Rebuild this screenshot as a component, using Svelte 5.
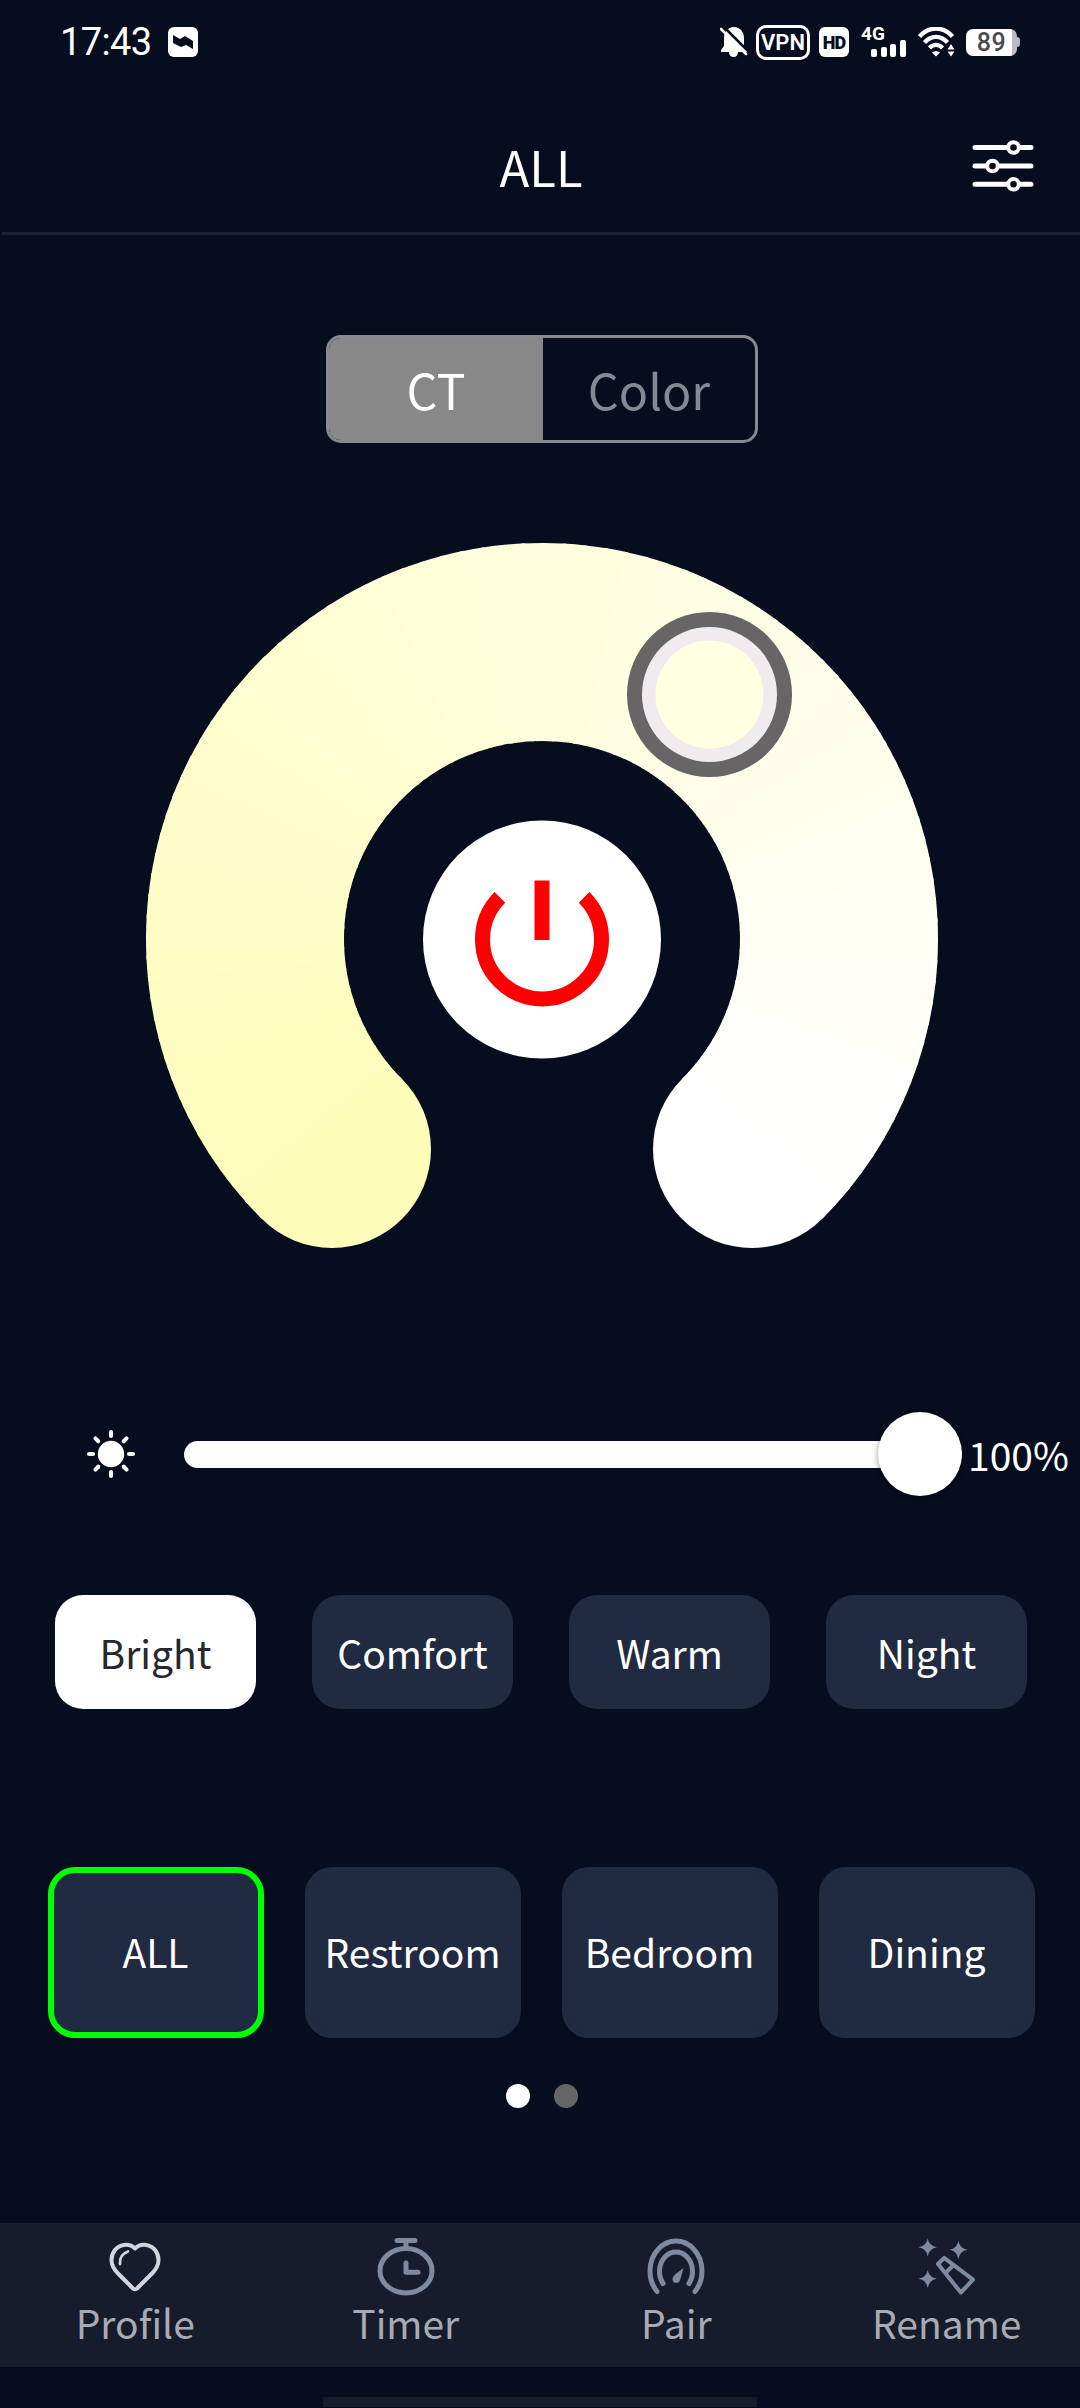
<script lang="ts">
  let mode = $state('CT')
  let scene = $state('Bright')
  let room = $state('ALL')
  let brightness = $state(100)

  const modes = ['CT', 'Color']
  const scenes = ['Bright', 'Comfort', 'Warm', 'Night']
  const rooms = ['ALL', 'Restroom', 'Bedroom', 'Dining']
  const tabs = ['Profile', 'Timer', 'Pair', 'Rename']

  // The dial sweeps 270 degrees, from bottom left to bottom right
  const CENTER = 396
  const RADIUS = 297
  const STEPS = 90

  function point(deg: number): string {
    const a = (deg * Math.PI) / 180
    return `${(CENTER + RADIUS * Math.cos(a)).toFixed(2)} ${(CENTER + RADIUS * Math.sin(a)).toFixed(2)}`
  }

  // Warm yellow to cold white
  function tone(t: number): string {
    return `rgb(${Math.round(253 + 2 * t)}, ${Math.round(253 + 2 * t)}, ${Math.round(186 + 69 * t)})`
  }

  const segments = Array.from({ length: STEPS }, (_, i) => {
    const from = 135 + (i * 270) / STEPS
    const to = Math.min(from + 270 / STEPS + 0.6, 405)
    return { d: `M${point(from)} A${RADIUS} ${RADIUS} 0 0 1 ${point(to)}`, color: tone(i / (STEPS - 1)) }
  })

  const rays = [0, 45, 90, 135, 180, 225, 270, 315]
</script>

<div class="screen">
  <div class="status">
    <div class="status-left">
      <span class="time">17:43</span>
      <svg width="30" height="30" viewBox="0 0 30 30">
        <rect width="30" height="30" rx="6" fill="#fff" />
        <path d="M5 8 L12 12 L17 9 L25 14 V22 L18 18 L13 20 L5 16Z" fill="#060d1e" />
      </svg>
    </div>
    <div class="status-right">
      <svg class="bell" width="28" height="32" viewBox="0 0 28 32">
        <path
          d="M14 1 C20 1 24 6 24 12 V20 L27 25 V26 H18 C18 29 16 31 14 31 C11 31 9 29 9 26 H1 V24 L4 20 V12 C4 6 8 1 14 1Z"
          fill="#fff"
        />
        <path d="M3 0 L28 25" stroke="#060d1e" stroke-width="2.500" />
        <path d="M1 3 L26 28" stroke="#fff" stroke-width="2.600" stroke-linecap="round" />
      </svg>
      <span class="vpn">VPN</span>
      <span class="hd">HD</span>
      <div class="signal">
        <span class="net">4G</span>
        <svg width="36" height="17" viewBox="0 0 36 17" fill="#fff">
          <rect x="0" y="9" width="6" height="8" rx="2" />
          <rect x="10" y="7" width="6" height="10" rx="2" />
          <rect x="19" y="4" width="6" height="13" rx="2" />
          <rect x="29" y="0" width="6" height="17" rx="2" />
        </svg>
      </div>
      <svg class="wifi" width="37" height="30" viewBox="0 0 37 30">
        <g fill="none" stroke="#fff" stroke-width="4.400">
          <path d="M1.500 9.500 C11 -1 25 -1 34.500 9.500" />
          <path d="M6.500 15.500 C13.500 8 22.500 8 29.500 15.500" />
          <path d="M11.500 21 C15.500 17 20.500 17 24.500 21" />
        </g>
        <path d="M14 25.500 Q18 22.500 22 25.500 L18 29.500Z" fill="#fff" />
        <path d="M29.500 22.500 L33 17 L36.500 22.500Z M29.500 24.500 L33 29.500 L36.500 24.500Z" fill="#fff" />
      </svg>
      <div class="battery"><span class="level">89</span></div>
    </div>
  </div>

  <header>
    <h1>{room}</h1>
    <svg class="filter" width="62" height="54" viewBox="0 0 62 54">
      <g stroke="#fff" stroke-width="5" stroke-linecap="round">
        <path d="M3 8.500 H59 M3 27 H59 M3 45.300 H59" />
      </g>
      <g fill="#060d1e" stroke="#fff" stroke-width="4">
        <circle cx="41.500" cy="8.500" r="5.300" />
        <circle cx="20.500" cy="27" r="5.300" />
        <circle cx="41.500" cy="45.300" r="5.300" />
      </g>
    </svg>
  </header>

  <div class="switch">
    {#each modes as m}
      <button class:active={mode === m} onclick={() => (mode = m)}>{m}</button>
    {/each}
  </div>

  <div class="dial">
    <svg width="792" height="708" viewBox="0 0 792 708">
      <circle cx="186" cy="606" r="99" fill={tone(0)} />
      <circle cx="606" cy="606" r="99" fill={tone(1)} />
      <g fill="none" stroke-width="198">
        {#each segments as s}
          <path d={s.d} stroke={s.color} />
        {/each}
      </g>

      <!-- handle -->
      <g class="handle">
        <circle cx="563.500" cy="151.500" r="82.500" fill="#676566" />
        <circle cx="563.500" cy="151.500" r="67.500" fill="#efebef" />
        <circle cx="563.500" cy="151.500" r="54" fill="#ffffe1" />
      </g>

      <!-- power -->
      <circle cx="396" cy="396.500" r="119" fill="#fff" />
      <g fill="none" stroke="#f00" stroke-width="15">
        <path d="M353.900 354.400 A59.500 59.500 0 1 0 438.100 354.400" />
        <path d="M396 337.500 V397" />
      </g>
    </svg>
  </div>

  <div class="brightness">
    <svg class="sun" width="50" height="50" viewBox="-25 -25 50 50">
      <circle r="13.200" fill="#fff" />
      {#each rays as r}
        <path d="M0 -18 V-22" transform="rotate({r})" stroke="#fff" stroke-width="4" stroke-linecap="round" />
      {/each}
    </svg>
    <div class="track">
      <div class="fill" style="width: {brightness}%"></div>
      <div class="thumb"></div>
    </div>
    <span class="percent">{brightness}%</span>
  </div>

  <div class="scenes">
    {#each scenes as s}
      <button class:active={scene === s} onclick={() => (scene = s)}>{s}</button>
    {/each}
  </div>

  <div class="rooms">
    {#each rooms as r}
      <button class:active={room === r} onclick={() => (room = r)}>{r}</button>
    {/each}
  </div>

  <div class="dots">
    <span class="dot current"></span>
    <span class="dot"></span>
  </div>

  <nav>
    {#each tabs as t}
      <div class="tab">
        <svg width="60" height="60" viewBox="0 0 60 60" fill="none" stroke-linecap="round" stroke-linejoin="round">
          {#if t === 'Profile'}
            <g stroke="#d3d5de">
              <path
                stroke-width="4"
                d="M30 11.500 C27 8.500 23 7.500 19 8 C11 9 6.500 16 6.500 23 C6.500 29 9 32.500 13 36.500 L28 51.500 Q30 53 32 51.500 L47 36.500 C51 32.500 53.500 29 53.500 23 C53.500 16 49 9 41 8 C37 7.500 33 8.500 30 11.500Z"
              />
              <path stroke-width="2.800" d="M15 27 C14.500 20.500 17 16.500 23 14.500" />
            </g>
          {:else if t === 'Timer'}
            <g stroke="#7d8aa0" stroke-width="5">
              <ellipse cx="30" cy="33.700" rx="26" ry="22.200" />
              <path d="M21 3.500 H39 M30 3.500 V11" />
              <path d="M30 26 V35.300 H42" />
            </g>
          {:else if t === 'Pair'}
            <g stroke="#7d8aa0" stroke-width="5">
              <path d="M11 54.500 A26 30 0 1 1 49 54.500" />
              <path d="M17 46.500 A16.500 19.500 0 1 1 43 46.500" />
            </g>
            <path
              d="M37.500 31 L34 43.500 C32.500 47.500 26 46.500 26.500 42 C26.800 40 28 39 29 37.500Z"
              fill="#7d8aa0"
            />
          {:else}
            <g fill="#7d8aa0">
              <path d="M10.700 1.500 Q12 9 20 10.300 Q12 11.600 10.700 19.500 Q9.400 11.600 1.500 10.300 Q9.400 9 10.700 1.500Z" />
              <path d="M41.400 4 Q42.700 11.500 50.500 12.800 Q42.700 14.100 41.400 22 Q40.100 14.100 32.500 12.800 Q40.100 11.500 41.400 4Z" />
              <path d="M10.700 33 Q12 40.500 20 41.800 Q12 43.100 10.700 51 Q9.400 43.100 1.500 41.800 Q9.400 40.500 10.700 33Z" />
            </g>
            <path
              d="M27.200 20.800 L21 27 L43.800 55.500 L56 42.700Z M36 28.500 L28.500 36"
              stroke="#7d8aa0"
              stroke-width="4"
            />
          {/if}
        </svg>
        <span>{t}</span>
      </div>
    {/each}
  </nav>

  <div class="home-bar"></div>
</div>

<style>
  :global(body) {
    background: #060d1e;
  }

  .screen {
    width: 1080px;
    height: 2408px;
    overflow: hidden;
    display: flex;
    flex-direction: column;
    background: #060d1e;
    color: #fff;
    font-family: 'Noto Sans CJK SC', 'Noto Sans', sans-serif;
    font-size: 39px;
  }

  svg {
    display: block;
    flex: none;
  }

  button {
    border: none;
    padding: 0;
    margin: 0;
    background: none;
    color: inherit;
    font: inherit;
    cursor: pointer;
  }

  /* status bar */
  .status {
    height: 84px;
    flex: none;
    display: flex;
    align-items: center;
    justify-content: space-between;
    padding: 0 60px;
    box-sizing: border-box;
  }
  .status-left {
    display: flex;
    align-items: center;
    gap: 18px;
  }
  .time {
    font-family: Roboto, sans-serif;
    font-size: 38px;
    line-height: 40px;
    width: 90px;
    letter-spacing: -0.6px;
  }
  .status-right {
    display: flex;
    align-items: center;
    font-family: Roboto, sans-serif;
    font-weight: 700;
  }
  .vpn {
    box-sizing: border-box;
    width: 54px;
    height: 35px;
    margin-left: 8px;
    border: 3px solid #fff;
    border-radius: 10px;
    font-size: 22px;
    font-weight: 600;
    line-height: 30px;
    text-align: center;
  }
  .hd {
    width: 30px;
    height: 30px;
    margin-left: 9px;
    border-radius: 6px;
    background: #fff;
    color: #060d1e;
    font-size: 18px;
    font-weight: 900;
    line-height: 31px;
    text-align: center;
    letter-spacing: -0.8px;
  }
  .signal {
    width: 46px;
    height: 30px;
    margin-left: 12px;
    display: flex;
    flex-direction: column;
    align-items: flex-end;
  }
  .net {
    align-self: flex-start;
    height: 13px;
    font-size: 19px;
    line-height: 14px;
  }
  .wifi {
    margin-left: 11px;
  }
  .battery {
    width: 54px;
    height: 28px;
    margin-left: 11px;
    display: flex;
    align-items: center;
  }
  .battery::after {
    content: '';
    width: 3px;
    height: 10px;
    border-radius: 0 3px 3px 0;
    background: #b9bbc3;
  }
  .level {
    width: 51px;
    height: 27px;
    border-radius: 7px;
    background: linear-gradient(to right, #fff 46px, #b9bbc3 46px);
    color: #4a4a4e;
    font-size: 25px;
    font-weight: 500;
    line-height: 28px;
    text-align: center;
    letter-spacing: 0.6px;
  }

  /* header */
  header {
    height: 151px;
    flex: none;
    box-sizing: border-box;
    display: grid;
    grid-template-columns: 1fr auto 1fr;
    align-items: center;
    border-bottom: 3px solid #1b2030;
    margin-left: 2px;
  }
  h1 {
    grid-column: 2;
    margin: 16px 0 0;
    font-size: 49px;
    font-weight: 400;
    line-height: 60px;
  }
  .filter {
    justify-self: end;
    margin: 15px 46px 0 0;
  }

  .switch {
    width: 432px;
    height: 108px;
    flex: none;
    box-sizing: border-box;
    margin: 100px 0 0 326px;
    display: grid;
    grid-template-columns: 214px 1fr;
    border: 3px solid #888a92;
    border-radius: 15px;
    overflow: hidden;
  }
  .switch button {
    font-size: 48.500px;
    line-height: 102px;
    color: #858993;
  }
  .switch .active {
    background: #888;
    color: #fff;
  }

  .dial {
    flex: none;
    margin: 100px 0 0 146px;
  }

  .brightness {
    height: 84px;
    flex: none;
    margin: 161px 0 0 86px;
    display: flex;
    align-items: center;
  }
  .track {
    width: 778px;
    height: 84px;
    flex: none;
    margin-left: 48px;
    display: flex;
    align-items: center;
  }
  .fill {
    height: 27px;
    flex: none;
    border-radius: 14px;
    background: #fdfffd;
  }
  .thumb {
    width: 84px;
    height: 84px;
    flex: none;
    margin-left: -84px;
    border-radius: 50%;
    background: #fff;
    box-shadow: 0 2px 6px rgba(0, 0, 0, 0.4);
  }
  .percent {
    margin-left: 6px;
    line-height: 60px;
  }

  .scenes,
  .rooms {
    flex: none;
    display: grid;
    grid-template-columns: repeat(4, 257px);
    justify-items: center;
    margin-left: 27px;
  }
  .scenes {
    margin-top: 99px;
  }
  .scenes button {
    width: 201px;
    height: 114px;
    border-radius: 28px;
    background: #202b41;
  }
  .scenes .active {
    background: #fff;
    color: #26282f;
  }
  .rooms {
    margin-top: 158px;
  }
  .rooms button {
    width: 216px;
    height: 171px;
    box-sizing: border-box;
    padding-bottom: 3px;
    border: 6px solid #202b41;
    border-radius: 27px;
    background: #202b41;
  }
  .rooms .active {
    border-color: #0f0;
  }

  .dots {
    flex: none;
    display: flex;
    gap: 24px;
    margin: 46px 0 0 506px;
  }
  .dot {
    width: 24px;
    height: 24px;
    border-radius: 50%;
    background: #666;
  }
  .current {
    background: #fff;
  }

  nav {
    flex: none;
    height: 144px;
    box-sizing: border-box;
    margin-top: 115px;
    padding-top: 14px;
    display: grid;
    grid-template-columns: repeat(4, 270.500px);
    background: #161c2c;
    color: #a8abb3;
  }
  .tab {
    display: flex;
    flex-direction: column;
    align-items: center;
  }
  .tab span {
    line-height: 50px;
  }

  .home-bar {
    flex: none;
    width: 434px;
    height: 10px;
    margin: 30px 0 0 323px;
    background: #151d2b;
  }
</style>
